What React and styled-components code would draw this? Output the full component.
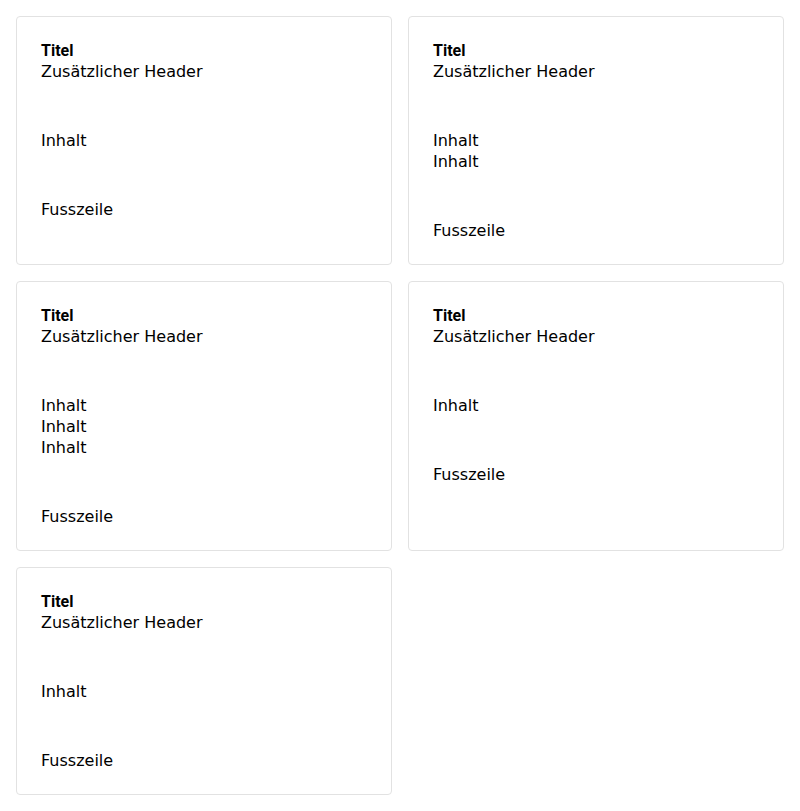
import styled, { createGlobalStyle } from "styled-components";
import React from "react";

const GlobalStyle = createGlobalStyle`
  body {
    margin: 0;
    background: #fff;
    font-family: "DejaVu Sans", Verdana, sans-serif;
    font-size: 16px;
    line-height: 21px;
    color: #000;
  }
`;

const Grid = styled.div`
  display: grid;
  grid-template-columns: 1fr 1fr;
  gap: 16px;
  padding: 16px;
`;

const Card = styled.div`
  border: 1px solid #e2e2e2;
  border-radius: 4px;
  padding: 23px 24px;
  display: flex;
  flex-direction: column;
  gap: 48px;
`;

const Header = styled.div`
  display: flex;
  flex-direction: column;
`;

const Title = styled.div`
  font-family: Roboto, "Liberation Sans", Arial, sans-serif;
  font-weight: 700;
  font-size: 16px;
`;

const Section = styled.div``;

const cards = [1, 2, 3, 1, 1];

const App = () => (
  <>
    <GlobalStyle />
    <Grid>
      {cards.map((n, i) => (
        <Card key={i}>
          <Header>
            <Title>Titel</Title>
            <div>Zusätzlicher Header</div>
          </Header>
          <Section>
            {Array.from({ length: n }).map((_, j) => (
              <div key={j}>Inhalt</div>
            ))}
          </Section>
          <Section>Fusszeile</Section>
        </Card>
      ))}
    </Grid>
  </>
);

export default App;
